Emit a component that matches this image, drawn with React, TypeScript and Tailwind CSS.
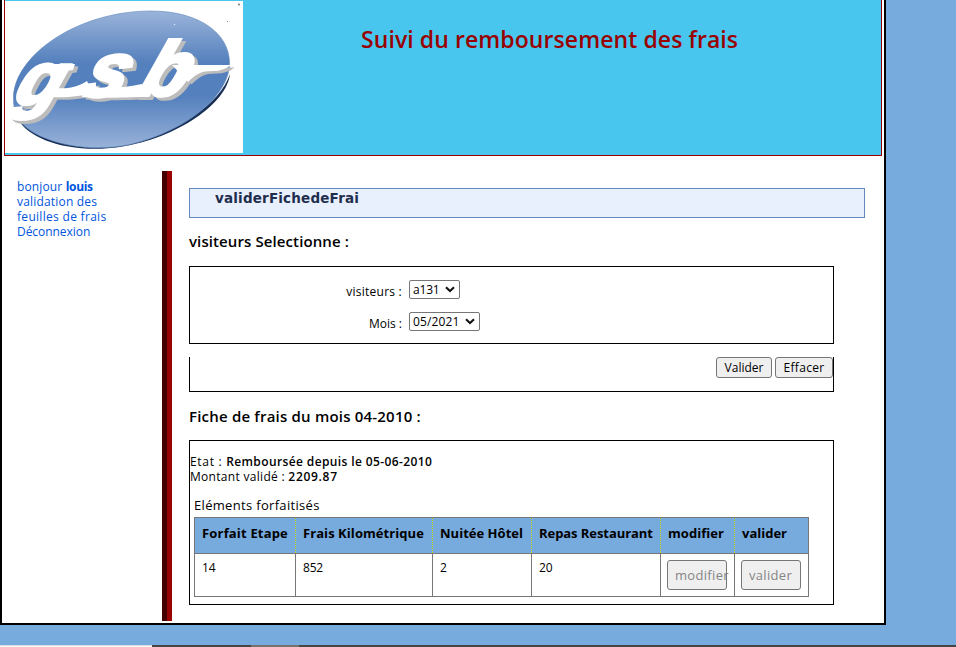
import type { ReactNode } from "react";

function Lettering({ fill }: { fill: string }) {
  return (
    <g fill={fill} stroke={fill} className="font-['Liberation_Sans',sans-serif] font-bold italic">
      <text transform="translate(12 104) skewX(-20)" fontSize="74" strokeWidth="3.500">g</text>
      <text transform="translate(79 96) skewX(-22)" fontSize="76" strokeWidth="4">s</text>
      <text transform="translate(137 95) skewX(-20)" fontSize="76" strokeWidth="4">b</text>
      <path d="M54 88 C66 89 76 88 87 81 L93 93 C82 96 66 98 52 97Z" stroke="none" />
      <path d="M84 87 C105 89 124 88 142 84 L150 96 C132 98 100 98 82 97Z" stroke="none" />
      <path d="M52 64 L75 64 L73 70 L56 72Z" stroke="none" />
      <path d="M172 65 L231 65 C226 69 220 71 213 71 C201 71 196 74 188 82Z" stroke="none" />
    </g>
  );
}

function Logo() {
  return (
    <svg width="238" height="152" viewBox="5 1 238 152" className="block bg-white" role="img">
      <defs>
        <linearGradient id="oval" x1="0" y1="0" x2="0" y2="1">
          <stop offset="0" stopColor="#9ab4da" />
          <stop offset=".38" stopColor="#5480bd" />
          <stop offset=".62" stopColor="#5480bd" />
          <stop offset="1" stopColor="#98b2d9" />
        </linearGradient>
      </defs>
      <path d="M230 74 C227 103 178 138 120 147 C72 154 29 140 18 119 C42 140 82 149 120 144 C177 134 220 104 230 74Z" fill="#172f56" />
      <path d="M13.500 98 C13.500 56 77 11 151 11 C200 11 229 34 229.500 62 C231 91 193 129 130 144.500 C82 155 29 139 18 118 C14 111 13.500 104 13.500 98Z" fill="url(#oval)" stroke="#5f86bb" strokeWidth=".6" />
      <g transform="translate(3.500 2.500)"><Lettering fill="#bcbcbc" /></g>
      <Lettering fill="#fff" />
      <circle cx="239" cy="4.500" r="1" fill="#777" />
      <circle cx="227.500" cy="21.500" r=".6" fill="#777" />
      <circle cx="174.500" cy="24.500" r=".8" fill="#d6e2f2" />
    </svg>
  );
}

function Select({ value, className }: { value: string; className: string }) {
  return (
    <span className={`flex h-[19px] items-center justify-between rounded-[2px] border border-[#767676] bg-white pr-1 pl-[3px] ${className}`}>
      <span className="leading-[15px]">{value}</span>
      <svg width="10" height="7" viewBox="0 0 10 7" fill="none" stroke="#111" strokeWidth="2">
        <path d="M1 1.200 L5 5 L9 1.200" />
      </svg>
    </span>
  );
}

function Button({ children, className }: { children: ReactNode; className: string }) {
  return (
    <button className={`flex items-center rounded-[3px] border border-[#767676] bg-[#efefef] whitespace-nowrap ${className}`}>
      {children}
    </button>
  );
}

const columns = [
  { head: "Forfait Etape", value: "14", width: "w-[101px]", track: "tracking-[0.18px]" },
  { head: "Frais Kilométrique", value: "852", width: "w-[137px]", track: "tracking-[0.07px]" },
  { head: "Nuitée Hôtel", value: "2", width: "w-[99px]", track: "tracking-[0.02px]" },
  { head: "Repas Restaurant", value: "20", width: "w-[129px]", track: "tracking-[-0.06px]" },
  { head: "modifier", action: "modifier", width: "w-[74px]", track: "tracking-[0.05px]" },
  { head: "valider", action: "valider", width: "w-[73px]", track: "tracking-normal" },
];

export default function App() {
  return (
    <div className="flex h-[647px] w-[956px] flex-col overflow-hidden bg-[#77aadd] font-['Open_Sans',sans-serif] text-[12px] leading-[15px] text-black">
      <div className="flex h-[625px] w-[886px] shrink-0 flex-col border-x-2 border-b-2 border-black bg-white px-[2px]">
        <header className="flex h-[156px] shrink-0 border-x border-b border-[#990000] bg-[#49c6ee] pt-px">
          <Logo />
          <h1 className="mt-[23px] ml-[118px] text-[23px] leading-[30px] font-semibold tracking-[0.08px] whitespace-nowrap text-[#990000]">
            Suivi du remboursement des frais
          </h1>
        </header>

        <div className="flex pt-[15px]">
          <nav className="w-[158px] shrink-0 pt-[8px] pl-[13px] whitespace-nowrap text-[#0055dd]">
            <p className="tracking-[0.14px]">
              bonjour <b className="font-bold tracking-[-0.3px]">louis</b>
            </p>
            <p className="tracking-[0.18px]">validation des</p>
            <p className="tracking-[0.3px]">feuilles de frais</p>
            <p className="tracking-[-0.05px]">Déconnexion</p>
          </nav>
          <div className="h-[450px] w-[10px] shrink-0 border-l-[5px] border-[#440000] bg-[#990000]" />

          <main className="ml-[17px] w-[676px] shrink-0 pt-[17px]">
            <h2 className="h-[30px] border border-[#6688bb] bg-[#e8effd] pt-px pl-[25px] font-['DejaVu_Sans',sans-serif] text-[13.5px] leading-[16px] font-bold tracking-[0.18px] text-[#1f2e4d]">
              validerFichedeFrai
            </h2>
            <h3 className="mt-[13px] text-[15px] leading-[20px] font-semibold tracking-[0.1px]">visiteurs Selectionne :</h3>

            <form className="w-[645px]">
              <div className="mt-[15px] flex h-[78px] flex-col gap-[13px] border border-black pt-[13px]">
                <div className="flex h-[19px]">
                  <label className="w-[212px] pt-[4px] text-right tracking-[0.24px]">visiteurs :</label>
                  <Select value="a131" className="ml-[7px] w-[51px] tracking-[-0.2px]" />
                </div>
                <div className="flex h-[19px]">
                  <label className="w-[212px] pt-[4px] text-right tracking-normal">Mois :</label>
                  <Select value="05/2021" className="ml-[7px] w-[71px] tracking-[0.15px]" />
                </div>
              </div>
              <div className="mt-[13px] flex h-[35px] justify-end gap-[3px] border-x border-b border-black">
                <Button className="h-[21px] w-[56px] justify-center">Valider</Button>
                <Button className="h-[21px] w-[58px] justify-center tracking-[0.3px]">Effacer</Button>
              </div>
            </form>

            <h3 className="mt-[14px] text-[15px] leading-[20px] font-semibold tracking-[0.2px]">
              Fiche de frais du mois 04-2010 :
            </h3>
            <section className="mt-[14px] h-[165px] w-[645px] border border-black pt-[13px]">
              <p className="tracking-[0.7px]">
                Etat : <b className="font-semibold tracking-[0.38px]">Remboursée depuis le 05-06-2010</b>
              </p>
              <p className="tracking-[0.3px]">
                Montant validé : <b className="font-semibold tracking-[0.7px]">2209.87</b>
              </p>
              <div className="mt-[12px] ml-[4px] text-[13px] leading-[18px] tracking-[0.32px]">Eléments forfaitisés</div>
              <div className="mt-[3px] ml-[4px] flex h-[80px] w-[615px] border border-[#777777]">
                {columns.map((c, i) => (
                  <div key={c.head} className={`flex shrink-0 flex-col ${c.width}`}>
                    <div className="border-b border-[#777777]">
                      <div
                        className={`h-[35px] bg-[#77aadd] pt-[6px] pl-[7px] text-[13px] leading-[18px] font-bold whitespace-nowrap ${c.track} ${i < 5 ? "border-r border-dotted border-[#c4d800]" : ""}`}
                      >
                        {c.head}
                      </div>
                    </div>
                    <div className={`h-[42px] ${i < 5 ? "border-r border-[#777777]" : ""} ${c.action ? "pt-[6px] pl-[6px]" : "pt-[6px] pl-[7px] tracking-[-0.2px]"}`}>
                      {c.action ? (
                        <Button className="h-[30px] w-[60px] pl-[7px] text-[13px] tracking-[0.32px] text-[#858585]">{c.action}</Button>
                      ) : (
                        c.value
                      )}
                    </div>
                  </div>
                ))}
              </div>
            </section>
          </main>
        </div>
      </div>
      <footer className="mt-auto flex h-[2px] shrink-0 bg-[#454545]">
        <div className="w-[152px] border-t border-[#d6dde3] bg-[#f8f8f5]" />
        <div className="ml-[99px] w-[48px] bg-[#77706c]" />
      </footer>
    </div>
  );
}
